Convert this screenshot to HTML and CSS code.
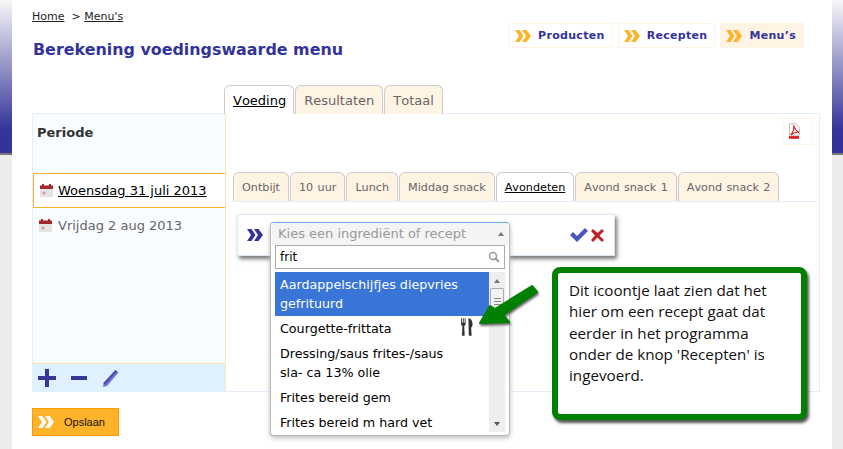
FILE: index.html
```html
<!DOCTYPE html>
<html lang="en">
<head>
    <meta charset="UTF-8">
    <title>Berekening voedingswaarde menu</title>
    <link rel="stylesheet" href="styles.css">
</head>
<body>
    <svg class="defs" width="0" height="0">
        <symbol id="chevrons" viewBox="0 0 16 12">
            <path d="M0 0h4.500l4 6-4 6H0l4-6zM7 0h4.500l4.500 6-4.500 6H7l4-6z"/>
        </symbol>
        <symbol id="calendar" viewBox="0 0 13 13">
            <rect y="1.500" width="13" height="11.500" fill="#e4e4e4"/>
            <path d="M0 1.500h2V0h2v1.500h5V0h2v1.500h2V5H0z" fill="#a32a2a"/>
            <circle cx="4" cy="9" r="1.500" fill="#d99"/>
        </symbol>
    </svg>

    <div class="page">
        <header class="top">
            <div>
                <p class="crumbs"><a href="#">Home</a> &nbsp;&gt; <a href="#">Menu's</a></p>
                <h1>Berekening voedingswaarde menu</h1>
            </div>
            <nav class="mainnav">
                <a class="navbtn" href="#"><svg class="chev"><use href="#chevrons"/></svg>Producten</a>
                <a class="navbtn" href="#"><svg class="chev"><use href="#chevrons"/></svg>Recepten</a>
                <a class="navbtn active" href="#"><svg class="chev"><use href="#chevrons"/></svg>Menu’s</a>
            </nav>
        </header>

        <div class="tabs maintabs">
            <a class="tab active" href="#">Voeding</a>
            <a class="tab" href="#">Resultaten</a>
            <a class="tab" href="#">Totaal</a>
        </div>

        <div class="panel">
            <aside class="side">
                <div class="side-body">
                    <h2>Periode</h2>
                    <a class="day active" href="#"><svg class="cal"><use href="#calendar"/></svg><span>Woensdag 31 juli 2013</span></a>
                    <a class="day" href="#"><svg class="cal"><use href="#calendar"/></svg><span>Vrijdag 2 aug 2013</span></a>
                </div>
                <div class="side-foot">
                    <svg width="18" height="18" viewBox="0 0 18 18"><path d="M7 0h4v7h7v4h-7v7H7v-7H0V7h7z" fill="#37379a"/></svg>
                    <svg width="16" height="18" viewBox="0 0 16 18"><rect y="7" width="16" height="4" fill="#37379a"/></svg>
                    <svg width="18" height="18" viewBox="0 0 18 18"><path d="M13.500 1l3 2.500L5 17l-4 1 .5-4z" fill="#7474d4"/><path d="M13.500 1l1.500 1.200L3 16l-1.500-2z" fill="#4c4cb0"/></svg>
                </div>
            </aside>

            <section class="content">
                <div class="pdfrow">
                    <span class="pdfbtn">
                        <svg width="11" height="17" viewBox="0 0 12 18">
                            <path d="M.5.500h7l4 4V13H.5z" fill="#fff" stroke="#bbb"/>
                            <path d="M5 2c1 4 2 6 6 8-3-.5-6 0-9 3 2-3 4-7 3-11z" fill="none" stroke="#e02020" stroke-width="1.200"/>
                            <rect y="14" width="11" height="3" fill="#e02020"/>
                        </svg>
                    </span>
                </div>
                <div class="tabs subtabs">
                    <a class="tab" href="#">Ontbijt</a>
                    <a class="tab" href="#">10 uur</a>
                    <a class="tab" href="#">Lunch</a>
                    <a class="tab" href="#">Middag snack</a>
                    <a class="tab active" href="#">Avondeten</a>
                    <a class="tab" href="#">Avond snack 1</a>
                    <a class="tab" href="#">Avond snack 2</a>
                </div>
                <div class="addrow">
                    <svg class="addchev"><use href="#chevrons"/></svg>
                    <div class="select-slot"></div>
                    <svg width="18" height="15" viewBox="0 0 18 15"><path d="M0 7l3-3 4 4 8-8 3 3L7 14z" fill="#4a55c0"/></svg>
                    <svg width="13" height="13" viewBox="0 0 13 13"><path d="M2 0l4.500 4L11 0l2 2-4.500 4.500L13 11l-2 2-4.500-4.500L2 13l-2-2 4-4.500L0 2z" fill="#c0202a"/></svg>
                </div>
            </section>
        </div>

        <a class="savebtn" href="#"><svg class="chev"><use href="#chevrons"/></svg>Opslaan</a>
    </div>

    <div class="dropdown">
        <div class="dd-head">Kies een ingrediënt of recept<i class="up"></i></div>
        <div class="dd-search">frit
            <svg width="12" height="12" viewBox="0 0 12 12"><circle cx="5" cy="5" r="3.500" fill="none" stroke="#999" stroke-width="1.500"/><path d="M7.500 7.500L11 11" stroke="#999" stroke-width="2"/></svg>
        </div>
        <div class="dd-body">
            <ul class="dd-list">
                <li class="hi">Aardappelschijfjes diepvries gefrituurd</li>
                <li>Courgette-frittata
                    <svg class="fork" width="12" height="18" viewBox="0 0 13 19">
                        <path d="M0 0v6c0 1.500 1 2 1.500 2.500L1 19h3l-.5-10.500C4 8 5 7.500 5 6V0H4v5H3V0H2v5H1V0z" fill="#333"/>
                        <path d="M8 0c3 0 4.500 3 4.500 7 0 2-1 3-1.500 3l.5 9h-3z" fill="#333"/>
                    </svg>
                </li>
                <li>Dressing/saus frites-/saus sla- ca 13% olie</li>
                <li>Frites bereid gem</li>
                <li>Frites bereid m hard vet</li>
            </ul>
            <div class="scrollbar">
                <i class="up"></i>
                <div class="thumb"></div>
                <i class="down"></i>
            </div>
        </div>
    </div>

    <svg class="arrow" width="62" height="44" viewBox="0 0 62 44">
        <path d="M1 39L11 22l5 3L53 2l5 6-34 23 6 7z" fill="#008000" stroke="#008000" stroke-linejoin="round" stroke-width="2"/>
    </svg>

    <div class="callout">Dit icoontje laat zien dat het hier om een recept gaat dat eerder in het programma onder de knop 'Recepten' is ingevoerd.</div>
</body>
</html>
```

FILE: styles.css
```css
body {
    margin: 0;
    height: 449px;
    overflow: hidden;
    position: relative;
    font-family: "DejaVu Sans", Verdana, sans-serif;
    font-size: 12px;
    color: #222;
    background: #ececec linear-gradient(#f8f8f8, #333399 130px, #333399 153px, #777 153px) no-repeat;
    background-size: 100% 155px;
}

a {
    color: inherit;
}

.defs {
    position: absolute;
}

.page {
    margin: 0 11px 0 12px;
    height: 449px;
    padding: 0 12px 0 20px;
    box-sizing: border-box;
    background: #fff;
    border-top: 1px solid transparent;
}

/* header */
.top {
    display: flex;
    justify-content: space-between;
    height: 84px;
    padding-right: 16px;
}

.crumbs {
    margin: 9px 0 0;
    font-size: 11px;
}

h1 {
    margin: 17px 0 0 1px;
    font-size: 15.900px;
    color: #333399;
}

.mainnav {
    display: flex;
    gap: 5px;
    margin-top: 22px;
    height: 25px;
}

.navbtn {
    display: flex;
    align-items: center;
    padding: 0 7px 0 5px;
    border: 1px solid #fff3e3;
    font-weight: bold;
    font-size: 11px;
    letter-spacing: .3px;
    color: #333399;
    text-decoration: none;
}

.navbtn.active {
    background: #fff3e3;
}

.chev {
    width: 16px;
    height: 12px;
    margin-right: 7px;
    fill: #ffb32b;
}

/* tabs */
.tabs {
    display: flex;
    gap: 1px;
    font-kerning: none;
}

.tab {
    border: 1px solid #ccc;
    border-bottom: 0;
    border-radius: 6px 6px 0 0;
    background: #fff3e3;
    color: #666;
    text-decoration: none;
}

.tab.active {
    background: #fff;
    color: #000;
    text-decoration: underline;
}

.maintabs {
    margin-left: 192px;
    height: 29px;
    position: relative;
    z-index: 1;
}

.maintabs .tab {
    padding: 7px 8px 0;
    font-size: 13px;
}

.maintabs .tab.active {
    padding-right: 7px;
}

.subtabs {
    height: 29px;
    border-bottom: 1px solid #e3eefa;
    margin-right: 3px;
}

.subtabs .tab {
    padding: 8px 8px 0;
    font-size: 11.200px;
    word-spacing: .8px;
}

/* main panel */
.panel {
    display: flex;
    height: 279px;
    margin-top: -1px;
}

.side {
    width: 194px;
    display: flex;
    flex-direction: column;
    border-right: 1px solid #ffe3ba;
    box-sizing: border-box;
}

.side-body {
    flex: 1;
    background: #f8fcff;
    border: 1px solid #e3eefa;
    border-right: 0;
    border-bottom: 1px solid #ffe0b0;
}

h2 {
    margin: 11px 0 25px 4px;
    font-size: 13px;
    height: 23px;
    color: #333;
}

.day {
    display: flex;
    align-items: center;
    gap: 6px;
    height: 33px;
    padding-left: 6px;
    margin-bottom: 2px;
    font-size: 13px;
    color: #666;
    text-decoration: none;
}

.day.active {
    background: #fff;
    color: #000;
    border: 1px solid #ffb32b;
    border-right: 0;
    margin-bottom: 1px;
    gap: 5px;
}

.day.active span {
    text-decoration: underline;
}

.cal {
    width: 13px;
    height: 13px;
}

.side-foot {
    display: flex;
    align-items: center;
    gap: 15px;
    height: 28px;
    padding-left: 6px;
    background: #dff0ff;
}

.content {
    flex: 1;
    border: 1px solid #e3eefa;
    border-left: 0;
    padding: 0 0 0 7px;
}

.pdfrow {
    display: flex;
    justify-content: flex-end;
    height: 58px;
    padding: 4px 6px 0 0;
    box-sizing: border-box;
}

.pdfbtn {
    width: 31px;
    height: 27px;
    box-sizing: border-box;
    border: 1px solid #fff3e3;
    padding: 4px 0 0 6px;
}

.addrow {
    display: flex;
    align-items: center;
    gap: 3px;
    width: 378px;
    height: 42px;
    margin: 12px 0 0 4px;
    padding-left: 9px;
    box-sizing: border-box;
    background: #fff;
    border: 1px solid #dde8f5;
    box-shadow: 2px 3px 4px #777;
}

.addchev {
    width: 16px;
    height: 14px;
    fill: #333399;
}

.select-slot {
    width: 301px;
}

.savebtn {
    display: flex;
    align-items: center;
    width: 87px;
    height: 28px;
    box-sizing: border-box;
    margin-top: 16px;
    padding-left: 5px;
    background: #ffb32b;
    border: 1px solid #ff9900;
    font-family: "Liberation Sans", Arial, sans-serif;
    font-size: 11px;
    color: #111;
    text-decoration: none;
}

.savebtn .chev {
    margin-right: 10px;
    fill: #fff;
}

/* ingredient dropdown, open over the row */
.dropdown {
    position: absolute;
    left: 270px;
    top: 222px;
    width: 240px;
    height: 214px;
    box-sizing: border-box;
    background: #fff;
    border: 1px solid #b8b8b8;
    border-top-color: #6fa8ef;
    border-radius: 4px;
    box-shadow: 0 2px 5px #bbb;
    padding: 0 4px;
}

.dd-head {
    position: relative;
    height: 22px;
    line-height: 21px;
    margin: 0 -3px;
    padding-left: 6px;
    font-size: 13px;
    color: #999;
    background: #f4f4f4;
}

.dd-head .up {
    position: absolute;
    right: 4px;
    top: 9px;
}

.up, .down {
    display: block;
    width: 0;
    border: 3px solid transparent;
}

.up {
    border-bottom: 4px solid #777;
    border-top: 0;
}

.down {
    border-top: 4px solid #555;
    border-bottom: 0;
}

.dd-search {
    display: flex;
    justify-content: space-between;
    align-items: center;
    height: 24px;
    box-sizing: border-box;
    border: 1px solid #aaa;
    padding: 0 4px;
    font-size: 12px;
    color: #000;
}

.dd-body {
    display: flex;
    margin-top: 3px;
    height: 160px;
}

.dd-list {
    flex: 1;
    margin: 0;
    padding: 0;
    list-style: none;
    font-size: 12.700px;
    line-height: 19px;
    color: #000;
}

.dd-list li {
    position: relative;
    padding: 3px 26px 3px 5px;
}

.dd-list li.hi {
    background: #3875d7;
    color: #fff;
}

.fork {
    position: absolute;
    left: 186px;
    top: 2px;
}

.scrollbar {
    width: 16px;
    background: #eee;
    display: flex;
    flex-direction: column;
    align-items: center;
    padding: 7px 0 6px;
    box-sizing: border-box;
}

.thumb {
    width: 14px;
    height: 20px;
    margin-top: 5px;
    border: 1px solid #aaa;
    border-bottom: 0;
    border-radius: 2px 2px 0 0;
    box-sizing: border-box;
    background: #f2f2f2 repeating-linear-gradient(#888 0 1px, transparent 1px 3px) center 9px / 7px 9px no-repeat;
}

.scrollbar .down {
    margin-top: auto;
}

.arrow {
    position: absolute;
    left: 479px;
    top: 284px;
    filter: drop-shadow(1px 2px 1px #666);
}

.callout {
    position: absolute;
    left: 552px;
    top: 267px;
    width: 255px;
    height: 153px;
    box-sizing: border-box;
    padding: 7px 11px;
    background: #fff;
    border: 6px solid #008000;
    border-radius: 8px;
    box-shadow: 2px 3px 3px #555;
    font-family: "Open Sans", sans-serif;
    font-size: 15.200px;
    line-height: 21.300px;
    color: #111;
}
```
